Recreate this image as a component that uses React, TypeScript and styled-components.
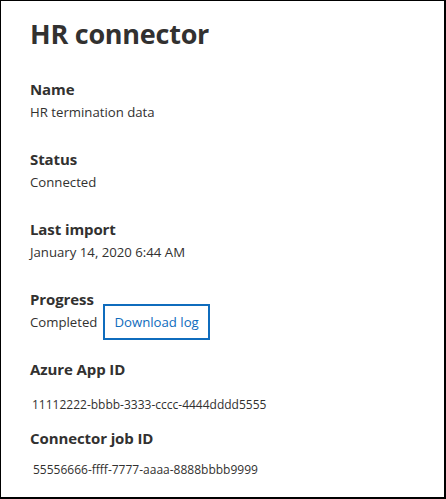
import React from "react";
import styled, { createGlobalStyle } from "styled-components";

const Global = createGlobalStyle`
  html, body { margin: 0; padding: 0; background: #fff; }
  body { font-family: "Open Sans", "Noto Sans", sans-serif; color: #323130; }
`;

const Panel = styled.div`
  box-sizing: border-box;
  width: 446px;
  height: 499px;
  border-style: solid;
  border-color: #000;
  border-width: 1px 2px 2px 1px;
  padding: 15px 0 0 29px;
  display: flex;
  flex-direction: column;
`;

const Title = styled.h1`
  margin: 0 0 27px 0;
  font-size: 27px;
  line-height: 36px;
  font-weight: 700;
  color: #323130;
  letter-spacing: -0.25px;
`;

const Section = styled.section<{ $gap?: number; $after?: number }>`
  display: flex;
  flex-direction: column;
  gap: ${(p) => p.$gap ?? 3}px;
  margin-bottom: ${(p) => p.$after ?? 27}px;
`;

const Label = styled.div`
  font-size: 15px;
  line-height: 20px;
  font-weight: 700;
  color: #323130;
  letter-spacing: -0.1px;
`;

const Value = styled.div<{ $indent?: number; $size?: number }>`
  font-size: ${(p) => p.$size ?? 13.2}px;
  line-height: 20px;
  color: #323130;
  padding-left: ${(p) => p.$indent ?? 0}px;
`;

const Row = styled.div`
  display: flex;
  align-items: center;
  gap: 6px;
  height: 20px;
`;

const LinkButton = styled.a`
  box-sizing: border-box;
  display: inline-flex;
  align-items: center;
  height: 36px;
  padding: 0 9px;
  border: 2px solid #0f6cbd;
  color: #0f6cbd;
  font-size: 13.2px;
  text-decoration: none;
  cursor: pointer;
`;

export default function App() {
  return (
    <>
      <Global />
      <Panel>
        <Title>HR connector</Title>
        <Section>
          <Label>Name</Label>
          <Value>HR termination data</Value>
        </Section>
        <Section>
          <Label>Status</Label>
          <Value>Connected</Value>
        </Section>
        <Section>
          <Label>Last import</Label>
          <Value>January 14, 2020 6:44 AM</Value>
        </Section>
        <Section>
          <Label>Progress</Label>
          <Row>
            <Value>Completed</Value>
            <LinkButton>Download log</LinkButton>
          </Row>
        </Section>
        <Section $gap={16} $after={13}>
          <Label>Azure App ID</Label>
          <Value $indent={2} $size={12}>11112222-bbbb-3333-cccc-4444dddd5555</Value>
        </Section>
        <Section $gap={12} $after={0}>
          <Label>Connector job ID</Label>
          <Value $indent={3} $size={12}>55556666-ffff-7777-aaaa-8888bbbb9999</Value>
        </Section>
      </Panel>
    </>
  );
}
